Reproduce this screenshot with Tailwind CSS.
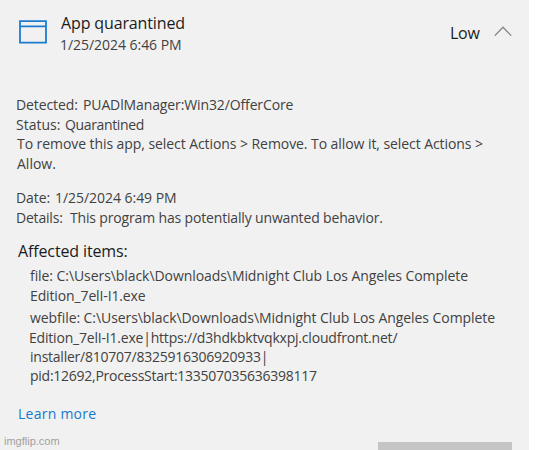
<!DOCTYPE html>
<html lang="en">
<head>
    <meta charset="UTF-8">
    <meta name="viewport" content="width=device-width, initial-scale=1.0">
    <title>Protection history</title>
    <script src="https://cdn.jsdelivr.net/npm/@tailwindcss/browser@4"></script>
</head>
<body class="bg-white overflow-hidden">
    <div class="w-[529px] h-[450px] bg-[#f1f1f1] flex flex-col overflow-hidden whitespace-nowrap font-['Open_Sans',sans-serif] text-sm text-[#414141]">
        <!-- Header -->
        <div class="flex h-[95px] shrink-0 pl-[19px] pt-[13px]">
            <svg class="w-7 h-6 mt-[7px]" viewBox="0 0 28 24" fill="none" stroke="#1c7cd0" stroke-width="1.8">
                <path d="M1 1.2H27V22.6H1ZM1 6.4H27"/>
            </svg>
            <div class="ml-3.5 w-[389px]">
                <h2 class="text-base leading-[21px] tracking-[-0.13px] text-[#1b1b1b]">App quarantined</h2>
                <p class="mt-px leading-5 -ml-px tracking-[-0.04px]">1/25/2024 6:46 PM</p>
            </div>
            <span class="mt-[9px] text-base leading-[22px] tracking-[-0.3px] w-[30px] text-[#1b1b1b]">Low</span>
            <svg class="w-[18px] h-[10px] ml-3.5 mt-[13px]" viewBox="0 0 18 10" fill="none" stroke="#858585" stroke-width="1.3">
                <path d="M.8 9.6L9 1.2L17.2 9.6"/>
            </svg>
        </div>

        <!-- Threat details -->
        <div class="pl-[17px] leading-[19.6px]">
            <p class="flex -ml-px"><span class="w-[67px] tracking-[-0.1px]">Detected:</span><span class="tracking-[-0.12px]">PUADlManager:Win32/OfferCore</span></p>
            <p class="flex -ml-px"><span class="w-[49px]">Status:</span><span class="tracking-[-0.36px]">Quarantined</span></p>
            <p class="tracking-[-0.07px]">To remove this app, select Actions &gt; Remove. To allow it, select Actions &gt;</p>
            <p>Allow.</p>
        </div>
        <div class="pl-4 mt-[15px] leading-[19.5px]">
            <p class="flex"><span class="w-[39px] tracking-[-0.1px]">Date:</span><span class="tracking-[-0.04px]">1/25/2024 6:49 PM</span></p>
            <p class="flex"><span class="w-[54px] tracking-[-0.2px]">Details:</span><span class="tracking-[-0.16px]">This program has potentially unwanted behavior.</span></p>
        </div>

        <!-- Affected items -->
        <h3 class="pl-[18px] mt-[13px] text-base leading-[22px] tracking-[-0.13px] text-[#1b1b1b]">Affected items:</h3>
        <div class="pl-[30px] mt-1 leading-[19.5px]">
            <p class="tracking-[-0.07px]">file: C:\Users\black\Downloads\Midnight Club Los Angeles Complete</p>
            <p class="tracking-[-0.13px]">Edition_7elI-I1.exe</p>
        </div>
        <div class="pl-[30px] mt-[3px] leading-[19.3px]">
            <p class="tracking-[-0.07px]">webfile: C:\Users\black\Downloads\Midnight Club Los Angeles Complete</p>
            <p class="-ml-px tracking-[-0.2px]">Edition_7elI-I1.exe|https://d3hdkbktvqkxpj.cloudfront.net/</p>
            <p class="tracking-[-0.24px]">installer/810707/8325916306920933|</p>
            <p class="tracking-[-0.26px]">pid:12692,ProcessStart:133507035636398117</p>
        </div>
        <a class="pl-[18px] mt-[18px] leading-5 tracking-[0.25px] text-[#1878cc]">Learn more</a>

        <!-- Footer -->
        <div class="mt-auto flex h-4 shrink-0 justify-between">
            <span class="pl-1 font-['Liberation_Sans',sans-serif] text-[11px] leading-[14px] text-[#a0a0a0]">imgflip.com</span>
            <div class="mt-2 mr-[17px] w-[134px] bg-[#c5c5c5]"></div>
        </div>
    </div>
</body>
</html>
